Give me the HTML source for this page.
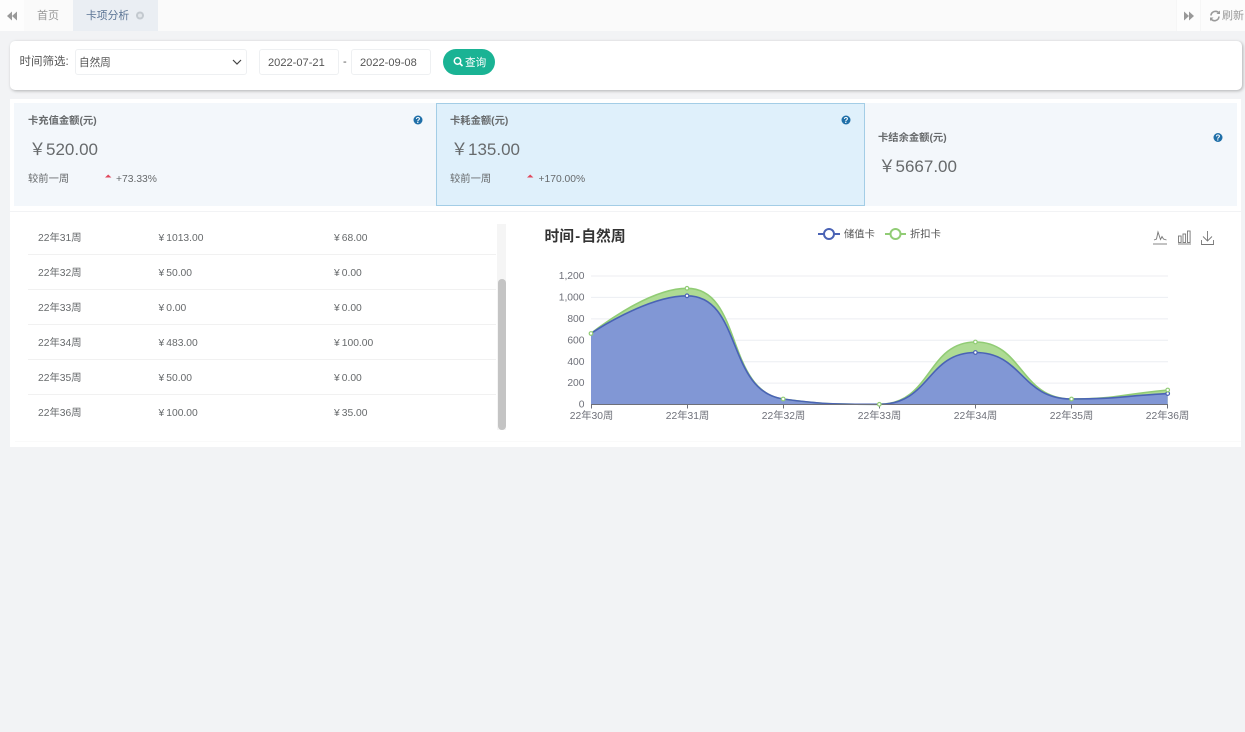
<!DOCTYPE html>
<html lang="zh"><head><meta charset="utf-8"><title>卡项分析</title>
<style>
html,body{margin:0;padding:0;width:1245px;height:732px;overflow:hidden;background:#f2f3f5;font-family:"Liberation Sans","Noto Sans CJK SC",sans-serif;color:#666}
body{filter:blur(.3px)}
.a{position:absolute}
.t{position:absolute;line-height:14px;white-space:nowrap;font-size:10.3px;color:#676a6c}
.y{margin-right:2px}
.b{font-weight:bold}
.v{font-size:17px;line-height:20px;color:#676a6c}
.fld{position:absolute;top:49px;height:24px;background:#fff;border:1px solid #eef0f2;border-radius:3px}
.line{position:absolute;left:28px;width:468px;height:1px;background:#f1f1f1}
svg{position:absolute;left:0;top:0}
</style></head><body>
<div class="a" style="left:0;top:0;width:1245px;height:31px;background:#fafafa"></div>
<div class="a" style="left:0;top:0;width:24px;height:31px;background:#fdfdfd"></div>
<div class="a" style="left:73px;top:0;width:85px;height:31px;background:#eaeef3"></div>
<div class="a" style="left:1176px;top:0;width:25px;height:31px;background:#fdfdfd;border-left:1px solid #f6f6f6;border-right:1px solid #f6f6f6;box-sizing:border-box"></div>
<div class="a" style="left:1201px;top:0;width:44px;height:31px;background:#fcfcfc"></div>
<div class="t" style="left:37px;top:9px;font-size:11px;color:#999">首页</div>
<div class="t" style="left:86px;top:9px;font-size:10.8px;color:#5a7394">卡项分析</div>
<div class="t" style="left:1222px;top:9px;font-size:11px;color:#9a9a9a">刷新</div>

<div class="a" style="left:10px;top:41px;width:1232px;height:49px;background:#fff;border-radius:5px;box-shadow:1px 1px 3px rgba(0,0,0,.28)"></div>
<div class="t" style="left:19.500px;top:55px;font-size:11.500px;color:#555">时间筛选:</div>
<div class="fld" style="left:75px;width:170px"></div>
<div class="t" style="left:79px;top:56px;font-size:10.600px;color:#555">自然周</div>
<div class="fld" style="left:259px;width:78px"></div>
<div class="fld" style="left:351px;width:78px"></div>
<div class="t" style="left:268px;top:56px;font-size:11.100px;color:#555">2022-07-21</div>
<div class="t" style="left:343px;top:55px;font-size:11.100px;color:#555">-</div>
<div class="t" style="left:360px;top:56px;font-size:11.100px;color:#555">2022-09-08</div>
<div class="a" style="left:443px;top:49px;width:52px;height:26px;background:#1ab394;border-radius:13px"></div>
<div class="t" style="left:465px;top:56px;font-size:10.600px;color:#fff">查询</div>

<div class="a" style="left:10px;top:99px;width:1231px;height:112px;background:#fff"></div>
<div class="a" style="left:14px;top:103px;width:422px;height:103px;background:#f3f7fb"></div>
<div class="a" style="left:436px;top:103px;width:429px;height:103px;box-sizing:border-box;background:#dff0fb;border:1px solid #a3cde6"></div>
<div class="a" style="left:865px;top:103px;width:372px;height:103px;background:#f3f7fb"></div>

<div class="t b" style="left:28px;top:115px">卡充值金额(元)</div>
<div class="t v" style="left:29px;top:140px">￥520.00</div>
<div class="t" style="left:28px;top:173px">较前一周</div>
<div class="t" style="left:116px;top:173px">+73.33%</div>

<div class="t b" style="left:450px;top:115px">卡耗金额(元)</div>
<div class="t v" style="left:451px;top:140px">￥135.00</div>
<div class="t" style="left:450px;top:173px">较前一周</div>
<div class="t" style="left:538.500px;top:173px">+170.00%</div>

<div class="t b" style="left:878px;top:132px">卡结余金额(元)</div>
<div class="t v" style="left:878.500px;top:157px">￥5667.00</div>

<div class="a" style="left:10px;top:212px;width:1231px;height:235px;background:#fff"></div>
<div class="a" style="left:15px;top:441px;width:1226px;height:1px;background:#fafafa"></div>
<div class="line" style="top:254px"></div><div class="line" style="top:289px"></div><div class="line" style="top:324px"></div><div class="line" style="top:359px"></div><div class="line" style="top:394px"></div>
<div class="a" style="left:497px;top:224px;width:9px;height:206px;background:#f5f5f5"></div>
<div class="a" style="left:497.500px;top:279px;width:8px;height:151px;background:#c4c4c4;border-radius:4px"></div>

<div class="t" style="left:38px;top:232px">22年31周</div><div class="t" style="left:158.500px;top:232px"><span class="y">¥</span>1013.00</div><div class="t" style="left:334px;top:232px"><span class="y">¥</span>68.00</div>
<div class="t" style="left:38px;top:267px">22年32周</div><div class="t" style="left:158.500px;top:267px"><span class="y">¥</span>50.00</div><div class="t" style="left:334px;top:267px"><span class="y">¥</span>0.00</div>
<div class="t" style="left:38px;top:302px">22年33周</div><div class="t" style="left:158.500px;top:302px"><span class="y">¥</span>0.00</div><div class="t" style="left:334px;top:302px"><span class="y">¥</span>0.00</div>
<div class="t" style="left:38px;top:337px">22年34周</div><div class="t" style="left:158.500px;top:337px"><span class="y">¥</span>483.00</div><div class="t" style="left:334px;top:337px"><span class="y">¥</span>100.00</div>
<div class="t" style="left:38px;top:372px">22年35周</div><div class="t" style="left:158.500px;top:372px"><span class="y">¥</span>50.00</div><div class="t" style="left:334px;top:372px"><span class="y">¥</span>0.00</div>
<div class="t" style="left:38px;top:407px">22年36周</div><div class="t" style="left:158.500px;top:407px"><span class="y">¥</span>100.00</div><div class="t" style="left:334px;top:407px"><span class="y">¥</span>35.00</div>

<svg width="1245" height="732" viewBox="0 0 1245 732" font-family="'Liberation Sans','Noto Sans CJK SC',sans-serif">
<g fill="#999"><path d="M12 11.500v9l-5-4.500z"/><path d="M17 11.500v9l-5-4.500z"/><path d="M1184 11.500v9l5-4.500z"/><path d="M1189 11.500v9l5-4.500z"/></g>
<circle cx="140" cy="15.500" r="4" fill="#c3c9cf"/><circle cx="140" cy="15.500" r="2" fill="#e2e6ea"/>
<g fill="none" stroke="#9a9a9a" stroke-width="1.600"><path d="M1211 15.500a4.500 4.500 0 0 1 8-2.500"/><path d="M1219 16.500a4.500 4.500 0 0 1-8 2.500"/></g>
<path d="M1220 10.500v3.500h-3.500z" fill="#9a9a9a"/><path d="M1210 21v-3.500h3.500z" fill="#9a9a9a"/>
<path d="M233 60l4 4 4-4" fill="none" stroke="#444" stroke-width="1.200"/>
<circle cx="457.500" cy="61" r="3.200" fill="none" stroke="#fff" stroke-width="1.500"/><path d="M460 63.500l2.500 2.500" stroke="#fff" stroke-width="1.700"/>
<g font-size="8" font-weight="bold" text-anchor="middle">
<circle cx="418" cy="120" r="4.500" fill="#1f6fa8"/><text x="418" y="123" fill="#fff">?</text>
<circle cx="846" cy="120" r="4.500" fill="#1f6fa8"/><text x="846" y="123" fill="#fff">?</text>
<circle cx="1218" cy="137.500" r="4.500" fill="#1f6fa8"/><text x="1218" y="140.500" fill="#fff">?</text>
</g>
<path d="M105 177.500l3.200-3 3.200 3z" fill="#e0475c"/><path d="M527 177.500l3.200-3 3.200 3z" fill="#e0475c"/>
<text x="544.500" y="241" font-size="14.800" font-weight="bold" fill="#333">时间<tspan dx="1.200">-</tspan><tspan dx="1">自然周</tspan></text>
<path d="M818 234h22" stroke="#4a63b5" stroke-width="2"/><circle cx="829" cy="234" r="5" fill="#fff" stroke="#4a63b5" stroke-width="2"/>
<text x="844" y="237.500" font-size="10.300" fill="#555">储值卡</text>
<path d="M885 234h21" stroke="#91cc75" stroke-width="2"/><circle cx="895.500" cy="234" r="5" fill="#fff" stroke="#91cc75" stroke-width="2"/>
<text x="910" y="237.500" font-size="10.300" fill="#555">折扣卡</text>
<g fill="none" stroke="#777" stroke-width=".9">
<path d="M1153 244h14"/><path d="M1154 240l2.500-1 1.500-7 2.500 7.500 1.500-3 1.500 2.500 3 1"/>
<path d="M1178 244h13"/><rect x="1178.500" y="236" width="2.600" height="6.500"/><rect x="1183" y="234" width="2.600" height="8.500"/><rect x="1187.500" y="231" width="2.600" height="11.500"/>
<path d="M1207.500 231v10M1203 236.500l4.500 4.500 4.500-4.500M1201.500 240v4.500h12v-4.500"/>
</g>
<g stroke="#eceef2" stroke-width="1"><path d="M591 276h577M591 297.400h577M591 318.900h577M591 340.300h577M591 361.700h577M591 383.100h577"/></g>
<path fill="#aedb94" d="M591 333.500C591 333.500 646.600 288.300 687 288.300C742.800 288.300 725.100 390.900 783.200 399C821.300 404.300 835.400 404.300 879.300 404.300C931.500 404.300 926.800 342 975.400 342C1022.900 342 1020 399 1071.500 399C1116.100 399 1119.600 394.500 1167.700 390V404.300H591Z"/>
<path fill="#8197d5" d="M591 333.500C591 333.500 646.400 295.800 687 295.800C742.400 295.800 726.100 391.200 783.200 399C822.200 404.300 834.300 404.300 879.300 404.300C930.400 404.300 926.800 352.500 975.400 352.500C1022.900 352.500 1021 399 1071.500 399C1117.100 399 1119.600 396.300 1167.700 393.600V404.300H591Z"/>
<path fill="none" stroke="#91cc75" stroke-width="1.600" d="M591 333.500C591 333.500 646.600 288.300 687 288.300C742.800 288.300 725.100 390.900 783.200 399C821.300 404.300 835.400 404.300 879.300 404.300C931.500 404.300 926.800 342 975.400 342C1022.900 342 1020 399 1071.500 399C1116.100 399 1119.600 394.500 1167.700 390"/>
<path fill="none" stroke="#4a63b5" stroke-width="1.600" d="M591 333.500C591 333.500 646.400 295.800 687 295.800C742.400 295.800 726.100 391.200 783.200 399C822.200 404.300 834.300 404.300 879.300 404.300C930.400 404.300 926.800 352.500 975.400 352.500C1022.900 352.500 1021 399 1071.500 399C1117.100 399 1119.600 396.300 1167.700 393.600"/>
<path d="M591 404.500h577M591.500 404v4.500M687.500 404v4.500M783.500 404v4.500M879.500 404v4.500M975.500 404v4.500M1071.500 404v4.500M1167.500 404v4.500" stroke="#6e7079" stroke-width="1" fill="none"/>
<g fill="#fff" stroke="#4a63b5" stroke-width="1.200"><circle cx="687" cy="295.800" r="1.800"/><circle cx="975.400" cy="352.500" r="1.800"/><circle cx="1167.700" cy="393.600" r="1.800"/></g>
<g fill="#fff" stroke="#91cc75" stroke-width="1.200"><circle cx="591" cy="333.500" r="1.800"/><circle cx="687" cy="288.300" r="1.800"/><circle cx="783.200" cy="399" r="1.800"/><circle cx="879.300" cy="404.300" r="1.800"/><circle cx="975.400" cy="342" r="1.800"/><circle cx="1071.500" cy="399" r="1.800"/><circle cx="1167.700" cy="390" r="1.800"/></g>
<g font-size="10.300" fill="#6e7079" text-anchor="end">
<text x="584.500" y="279">1,200</text><text x="584.500" y="300.500">1,000</text><text x="584.500" y="322">800</text><text x="584.500" y="343.400">600</text><text x="584.500" y="364.800">400</text><text x="584.500" y="386.200">200</text><text x="584.500" y="407.500">0</text>
</g>
<g font-size="10.300" fill="#6e7079" text-anchor="middle">
<text x="591.500" y="419">22年30周</text><text x="687.500" y="419">22年31周</text><text x="783.500" y="419">22年32周</text><text x="879.500" y="419">22年33周</text><text x="975.500" y="419">22年34周</text><text x="1071.500" y="419">22年35周</text><text x="1167.500" y="419">22年36周</text>
</g>
</svg>
</body></html>
